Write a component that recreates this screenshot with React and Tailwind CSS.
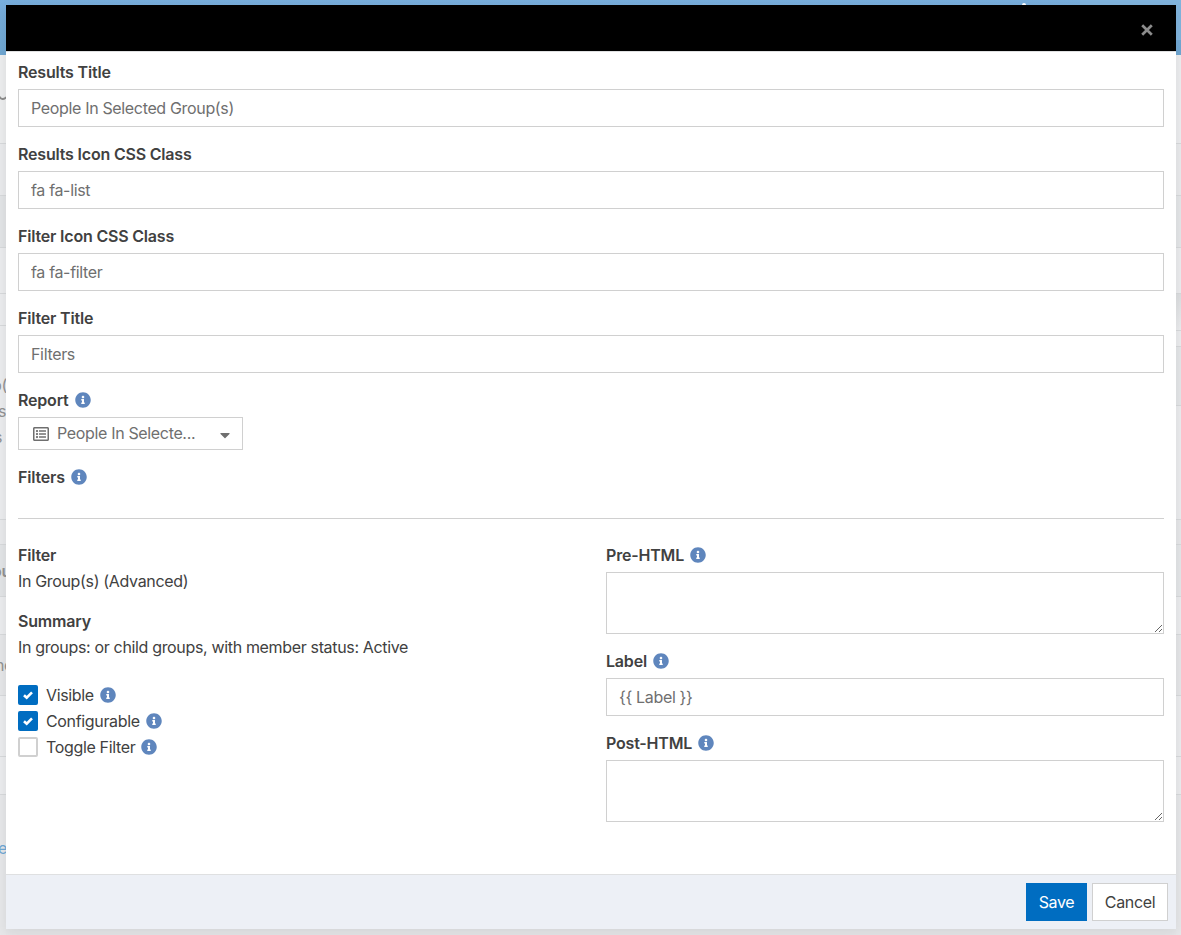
import { FaInfoCircle, FaCaretDown, FaRegListAlt } from 'react-icons/fa'

// rows of the page that stay visible beside the dialog
const leftRows = [
  { h: 'h-[89px]', bg: 'bg-[#ecedee]', mark: true },
  { h: 'h-[52px]', bg: 'bg-[#e9eaec]' },
  { h: 'h-[52px]', bg: 'bg-[#e2e4e6]' },
  { h: 'h-[46px]', bg: 'bg-[#ebecee]' },
  { h: 'h-[32px]', bg: 'bg-[#ebecee]' },
  {
    h: 'h-[194px]',
    bg: 'bg-[#ebecee]',
    style: 'text-base leading-[26px] text-[#929292] pt-[46px]',
    lines: [
      { text: 'p(', shift: '-ml-[8px]' },
      { text: 's', shift: '-ml-[2px]' },
      { text: 's', shift: '-ml-[6px]' },
    ],
  },
  { h: 'h-[25px]', bg: 'bg-[#e8e9eb]' },
  {
    h: 'h-[52px]',
    bg: 'bg-[#e2e4e6]',
    style: 'text-base font-semibold leading-[52px] text-[#929292]',
    lines: [{ text: 'ou', shift: '-ml-[8px]' }],
  },
  { h: 'h-[38px]', bg: 'bg-[#ebecee]' },
  {
    h: 'h-[61px]',
    bg: 'bg-[#e5e6e8]',
    style: 'text-base leading-[61px] text-[#929292]',
    lines: [{ text: 'ne', shift: '-ml-[5px]' }],
  },
  { h: 'h-[61px]', bg: 'bg-[#ebecee]' },
  { h: 'h-[38px]', bg: 'bg-[#ebecee]' },
  {
    h: 'h-[141px]',
    bg: 'bg-[#e6e7e9]',
    style: 'text-base leading-[107px] text-[#6fa8d4]',
    lines: [{ text: 'e', shift: '-ml-[2px]' }],
  },
]

const rightRows = [
  { h: 'h-[89px]', bg: 'bg-[#ecedef]' },
  { h: 'h-[52px]', bg: 'bg-[#e9eaec]' },
  { h: 'h-[52px]', bg: 'bg-[#e4e6e8]' },
  { h: 'h-[46px]', bg: 'bg-[#ebecee]' },
  { h: 'h-[37px]', bg: 'bg-linear-to-b from-[#dcdee0] to-[#ebecee]' },
  { h: 'h-[16px]', bg: 'bg-[#ebecee]' },
  { h: 'h-[59px]', bg: 'bg-[#e4e6e8]' },
  { h: 'h-[114px]', bg: 'bg-[#ebecee]' },
  { h: 'h-[25px]', bg: 'bg-[#e6e7e9]' },
  { h: 'h-[52px]', bg: 'bg-[#e4e6e8]' },
  { h: 'h-[38px]', bg: 'bg-[#ebecee]' },
  { h: 'h-[61px]', bg: 'bg-[#e5e6e8]' },
  { h: 'h-[61px]', bg: 'bg-[#ebecee]' },
  { h: 'h-[38px]', bg: 'bg-[#ebecee]' },
  { h: 'h-[141px]', bg: 'bg-[#e6e7e9]' },
]

function Rows({ rows }) {
  return rows.map((row, i) => (
    <div key={i} className={`${row.h} ${row.bg} overflow-hidden border-b border-[#d7d9db]`}>
      {row.mark && (
        <svg className="mt-10 h-1.5 w-1.5" viewBox="0 0 6 6" fill="none" stroke="#8c8c8c" strokeWidth="1.8">
          <path d="M-0.5 1.5C0.5 4.8 4 4.6 6.2 2.2" />
        </svg>
      )}
      {row.lines && (
        <div className={row.style}>
          {row.lines.map((line, j) => (
            <div key={j} className={line.shift}>{line.text}</div>
          ))}
        </div>
      )}
    </div>
  ))
}

function Info() {
  return <FaInfoCircle className="ml-1.5 size-4 shrink-0 text-[#5f86bd]" />
}

function Label({ children, info }) {
  return (
    <div className="flex h-[26px] items-center font-semibold tracking-[-0.19px] text-[#414141]">
      <span>{children}</span>
      {info && <Info />}
    </div>
  )
}

function Field({ label, value, info }) {
  return (
    <div className="mb-3.5">
      <Label info={info}>{label}</Label>
      <input
        type="text"
        defaultValue={value}
        className="mt-1 block h-[38px] w-full border border-[#d0d0d0] bg-white px-3 tracking-[-0.34px] text-[#6f6f6f] outline-none"
      />
    </div>
  )
}

function Area({ label }) {
  return (
    <div className="mb-3.5">
      <Label info>{label}</Label>
      <textarea className="mt-1 block h-[62px] w-full resize border border-[#d0d0d0] bg-white px-3 outline-none" />
    </div>
  )
}

function Check({ label, checked }) {
  return (
    <div className="flex h-[26px] items-center">
      <span
        className={
          checked
            ? 'flex size-5 items-center justify-center rounded-xs bg-[#006dc1]'
            : 'size-5 rounded-xs border-2 border-[#d0d0d0] bg-white'
        }
      >
        {checked && (
          <svg className="size-2.5" viewBox="0 0 10 10" fill="none" stroke="#fff" strokeWidth="2.6">
            <path d="M1 5.2L3.7 7.7L9 2.4" />
          </svg>
        )}
      </span>
      <span className="ml-2">{label}</span>
      <Info />
    </div>
  )
}

export default function App() {
  return (
    <div className="relative h-[935px] w-[1181px] overflow-hidden bg-[#e5e6e8] font-[Inter,sans-serif] text-base leading-[26px] tracking-[-0.34px] text-[#414141]">
      <div className="flex h-[55px] justify-end bg-linear-to-b from-[#78aedc] to-[#6fa6d1]">
        <div className="h-10 w-[101px] bg-[#81b4dd]" />
      </div>
      <div className="absolute left-[1022px] top-[3px] h-1 w-1 rounded-full bg-white" />
      <div className="flex justify-between">
        <div className="w-1.5 overflow-hidden">
          <Rows rows={leftRows} />
        </div>
        <div className="w-[5px] overflow-hidden">
          <Rows rows={rightRows} />
        </div>
      </div>

      <div className="absolute left-1.5 top-[5px] flex h-[924px] w-[1170px] flex-col bg-white shadow-[0_4px_12px_rgba(0,0,0,0.08)]">
        <div className="flex h-[47px] shrink-0 items-center justify-end border-b border-[#dfe0e1] bg-black pr-[23px] pt-1">
          <svg className="size-3" viewBox="0 0 12 12" fill="none" stroke="#8c8c8c" strokeWidth="2.7">
            <path d="M1.2 1.2L10.8 10.8M10.8 1.2L1.2 10.8" />
          </svg>
        </div>

        <div className="flex-1 px-3 pt-[7px]">
          <Field label="Results Title" value="People In Selected Group(s)" />
          <Field label="Results Icon CSS Class" value="fa fa-list" />
          <Field label="Filter Icon CSS Class" value="fa fa-filter" />
          <Field label="Filter Title" value="Filters" />

          <Label info>Report</Label>
          <div className="mb-3.5 mt-1 flex h-[33px] w-[225px] items-center border border-[#d0d0d0] pl-3.5 pr-[9px] text-[#6f6f6f]">
            <FaRegListAlt className="size-4" />
            <span className="mb-px ml-2 flex-1">People In Selecte...</span>
            <FaCaretDown className="mt-0.5 size-4" />
          </div>

          <Label info>Filters</Label>
          <hr className="mb-[23px] mt-7 border-[#d0d0d0]" />

          <div className="grid grid-cols-2 gap-[30px]">
            <div>
              <Label>Filter</Label>
              <p className="mb-3.5">In Group(s) (Advanced)</p>
              <Label>Summary</Label>
              <p className="mb-[22px]">In groups: or child groups, with member status: Active</p>
              <Check label="Visible" checked />
              <Check label="Configurable" checked />
              <Check label="Toggle Filter" />
            </div>
            <div>
              <Area label="Pre-HTML" />
              <Field label="Label" value="{{ Label }}" info />
              <Area label="Post-HTML" />
            </div>
          </div>
        </div>

        <div className="flex h-[55px] shrink-0 items-center justify-end gap-[5px] border-t border-[#dfe0e1] bg-[#edf0f6] pr-2">
          <button className="h-[38px] w-[61px] bg-[#006dc1] text-white">Save</button>
          <button className="h-[38px] w-[76px] border border-[#d0d0d0] bg-white">Cancel</button>
        </div>
      </div>
    </div>
  )
}
